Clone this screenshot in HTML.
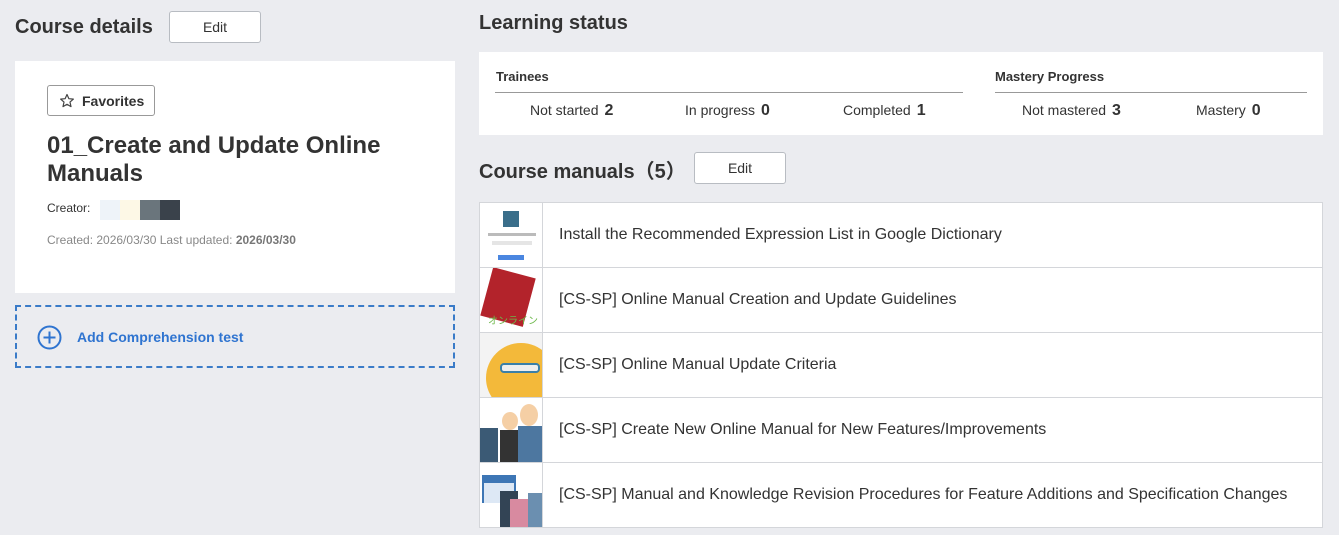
<!DOCTYPE html>
<html><head><style>
*{box-sizing:border-box;margin:0;padding:0}
body{width:1339px;height:535px;background:#ebecf0;font-family:"Liberation Sans","Noto Sans CJK JP",sans-serif;color:#333;position:relative;overflow:hidden}
.abs{position:absolute}
h2{font-size:20px;font-weight:bold;color:#333;position:absolute}
.btn{position:absolute;background:#fff;border:1px solid #b8bcc2;border-radius:3px;font-size:14px;text-align:center;color:#333}
.stat{position:absolute;top:102px;font-size:14px;color:#333}
.stat b{font-size:16px;margin-left:6px}
.row{position:absolute;left:479px;width:844px;height:66px;background:#fff;border:1px solid #d4d6da}
.row .th{position:absolute;left:0;top:0;width:63px;height:64px;border-right:1px solid #d4d6da;overflow:hidden}
.row .t{position:absolute;left:79px;top:23px;font-size:16px;color:#333}
</style></head><body>
<h2 style="left:15px;top:16px">Course details</h2>
<div class="btn" style="left:169px;top:11px;width:92px;height:32px;line-height:30px">Edit</div>
<div class="abs" style="left:15px;top:61px;width:440px;height:232px;background:#fff"></div>
<div class="btn" style="left:47px;top:85px;width:108px;height:31px;line-height:31px;font-weight:bold;font-size:14px;text-align:left;padding-left:34px;border-color:#999">Favorites
<svg class="abs" style="left:11px;top:7px" width="16" height="16" viewBox="0 0 16 16"><path d="M8 1.5l1.9 4.2 4.5.4-3.4 3 1 4.5L8 11.3 4 13.6l1-4.5-3.4-3 4.5-.4z" fill="none" stroke="#444" stroke-width="1.2" stroke-linejoin="round"/></svg></div>
<div class="abs" style="left:47px;top:132px;font-size:24px;font-weight:bold;line-height:28px;color:#333;width:400px">01_Create and Update Online Manuals</div>
<div class="abs" style="left:47px;top:201px;font-size:12px;color:#333">Creator:</div>
<div class="abs" style="left:100px;top:200px;width:20px;height:20px;background:#eef3f9"></div>
<div class="abs" style="left:120px;top:200px;width:20px;height:20px;background:#fdf8e6"></div>
<div class="abs" style="left:140px;top:200px;width:20px;height:20px;background:#6a757c"></div>
<div class="abs" style="left:160px;top:200px;width:20px;height:20px;background:#3a424b"></div>
<div class="abs" style="left:47px;top:233px;font-size:12px;color:#888">Created: 2026/03/30 Last updated: <b style="color:#777">2026/03/30</b></div>
<div class="abs" style="left:15px;top:305px;width:440px;height:63px;border:2px dashed #3a7bc8"></div>
<svg class="abs" style="left:37px;top:325px" width="25" height="25" viewBox="0 0 25 25"><circle cx="12.5" cy="12.5" r="11" fill="none" stroke="#2f74d0" stroke-width="2"/><path d="M12.5 6.5v12M6.5 12.5h12" stroke="#2f74d0" stroke-width="2"/></svg>
<div class="abs" style="left:77px;top:329px;font-size:14px;font-weight:bold;color:#2f74d0">Add Comprehension test</div>

<h2 style="left:479px;top:12px">Learning status</h2>
<div class="abs" style="left:479px;top:52px;width:844px;height:83px;background:#fff"></div>
<div class="abs" style="left:496px;top:69px;font-size:13px;font-weight:bold">Trainees</div>
<div class="abs" style="left:995px;top:69px;font-size:13px;font-weight:bold">Mastery Progress</div>
<div class="abs" style="left:495px;top:92px;width:468px;height:1px;background:#999"></div>
<div class="abs" style="left:995px;top:92px;width:312px;height:1px;background:#999"></div>
<div class="stat" style="left:530px">Not started<b>2</b></div>
<div class="stat" style="left:685px">In progress<b>0</b></div>
<div class="stat" style="left:843px">Completed<b>1</b></div>
<div class="stat" style="left:1022px">Not mastered<b>3</b></div>
<div class="stat" style="left:1196px">Mastery<b>0</b></div>

<h2 style="left:479px;top:155px">Course manuals（5）</h2>
<div class="btn" style="left:694px;top:152px;width:92px;height:32px;line-height:30px">Edit</div>

<div class="row" style="top:202px"><div class="th" style="background:#fff"><div class="abs" style="left:23px;top:8px;width:16px;height:16px;background:#3a6e8a"></div><div class="abs" style="left:8px;top:30px;width:48px;height:3px;background:#bbb"></div><div class="abs" style="left:12px;top:38px;width:40px;height:4px;background:#e5e5e5"></div><div class="abs" style="left:18px;top:52px;width:26px;height:5px;background:#4a86e0"></div></div><div class="t">Install the Recommended Expression List in Google Dictionary</div></div>
<div class="row" style="top:267px"><div class="th" style="background:#fff"><div class="abs" style="left:6px;top:4px;width:44px;height:50px;background:#b3232b;transform:rotate(15deg)"></div><div class="abs" style="left:8px;top:44px;font-size:10px;color:#6cb84a">オンライン</div></div><div class="t">[CS-SP] Online Manual Creation and Update Guidelines</div></div>
<div class="row" style="top:332px"><div class="th" style="background:#f3f3f3"><div class="abs" style="left:6px;top:10px;width:70px;height:70px;border-radius:50%;background:#f3b93a"></div><div class="abs" style="left:20px;top:30px;width:40px;height:10px;border:2px solid #3a7fa8;border-radius:4px;background:#eee"></div></div><div class="t">[CS-SP] Online Manual Update Criteria</div></div>
<div class="row" style="top:397px"><div class="th" style="background:#fff"><div class="abs" style="left:0;top:30px;width:18px;height:34px;background:#3b5a75"></div><div class="abs" style="left:20px;top:32px;width:18px;height:32px;background:#333"></div><div class="abs" style="left:38px;top:28px;width:25px;height:36px;background:#4d77a0"></div><div class="abs" style="left:40px;top:6px;width:18px;height:22px;border-radius:50%;background:#f5cfa5"></div><div class="abs" style="left:22px;top:14px;width:16px;height:18px;border-radius:50%;background:#f5cfa5"></div></div><div class="t">[CS-SP] Create New Online Manual for New Features/Improvements</div></div>
<div class="row" style="top:462px"><div class="th" style="background:#fff"><div class="abs" style="left:2px;top:12px;width:34px;height:28px;background:#3d76b5"></div><div class="abs" style="left:4px;top:20px;width:30px;height:20px;background:#dde8f5"></div><div class="abs" style="left:20px;top:28px;width:18px;height:36px;background:#345"></div><div class="abs" style="left:30px;top:36px;width:18px;height:28px;background:#d88aa0"></div><div class="abs" style="left:48px;top:30px;width:15px;height:34px;background:#6b8fb0"></div></div><div class="t">[CS-SP] Manual and Knowledge Revision Procedures for Feature Additions and Specification Changes</div></div>
</body></html>
